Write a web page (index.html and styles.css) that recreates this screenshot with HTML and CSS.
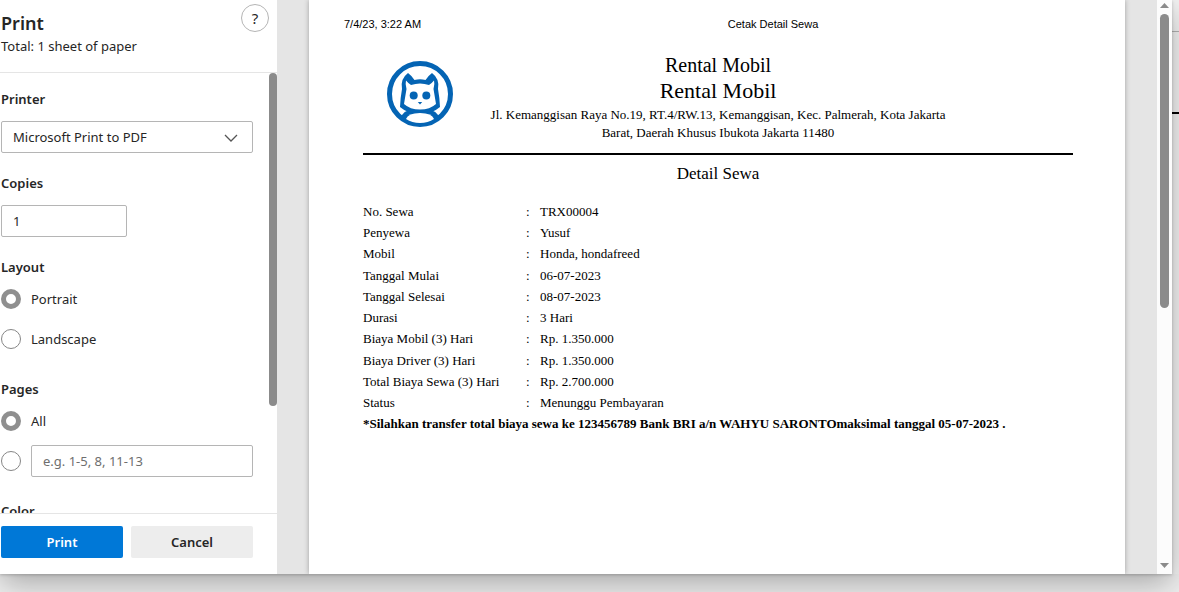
FILE: index.html
```html
<!DOCTYPE html>
<html lang="en">
<head>
<meta charset="utf-8">
<title>Print</title>
<link rel="stylesheet" href="styles.css">
</head>
<body>
<div class="screen">
  <main class="dialog">
    <form class="sidebar">
      <header class="sidebar-head">
        <div>
          <h1 class="title">Print</h1>
          <p class="total">Total: 1 sheet of paper</p>
        </div>
        <button class="help" type="button" aria-label="Help">?</button>
      </header>
      <div class="settings">
        <div class="fields">
          <div class="field">
            <label class="label" for="printer">Printer</label>
            <div class="select-wrap">
              <select class="control" id="printer"><option>Microsoft Print to PDF</option></select>
              <svg class="chevron" viewBox="0 0 14 8" aria-hidden="true"><path d="M1 1l6 6 6-6" fill="none" stroke="#555" stroke-width="1.3"/></svg>
            </div>
          </div>
          <div class="field">
            <label class="label" for="copies">Copies</label>
            <input class="control copies" id="copies" type="text" value="1">
          </div>
          <fieldset class="choices">
            <legend class="label">Layout</legend>
            <label class="choice"><input class="radio" type="radio" name="layout" checked>Portrait</label>
            <label class="choice"><input class="radio" type="radio" name="layout">Landscape</label>
          </fieldset>
          <fieldset class="choices">
            <legend class="label">Pages</legend>
            <label class="choice"><input class="radio" type="radio" name="pages" checked>All</label>
            <div class="choice">
              <input class="radio" type="radio" name="pages" aria-label="Page range">
              <input class="control range" type="text" placeholder="e.g. 1-5, 8, 11-13" aria-label="Pages to print">
            </div>
          </fieldset>
          <div class="label">Color</div>
        </div>
        <div class="side-thumb"></div>
      </div>
      <footer class="actions">
        <button class="button primary" type="button">Print</button>
        <button class="button" type="button">Cancel</button>
      </footer>
    </form>
    <section class="preview">
      <article class="paper">
        <div class="running-head">
          <span>7/4/23, 3:22 AM</span>
          <span class="running-title">Cetak Detail Sewa</span>
        </div>
        <header class="letterhead">
          <svg class="logo" viewBox="0 0 66 66" role="img" aria-label="Rental Mobil logo">
            <circle cx="33" cy="33" r="30.5" fill="#fff" stroke="#0464b4" stroke-width="5"/>
            <path d="M14 57Q16 49 25 49h16q9 0 11 8l-7 5H21z" fill="#0464b4"/>
            <path d="M21 12Q25 15 27.500 19Q33 17.500 38.500 19Q41 15 45 12Q53 18 51 28Q52.500 36 53 46Q45 53 33 53Q21 53 13 46Q13.500 36 15 28Q13 18 21 12Z" fill="#0464b4"/>
            <path d="M19 19.500Q21 22 24 24Q33 21 42 24Q45 22 47 19.500Q48 23 46.500 28L49 43Q43 48.500 33 48.500T17 43L19.500 28Q18 23 19 19.500Z" fill="#fff"/>
            <circle cx="26.700" cy="34.500" r="4" fill="#0464b4"/><circle cx="39.300" cy="34.500" r="4" fill="#0464b4"/>
            <path d="M30.800 41h4.400L33 43.500z" fill="#0464b4"/>
            <path d="M19 58q2-6 14-6t14 6q-6 4-14 4t-14-4z" fill="#fff"/>
          </svg>
          <div class="company">
            <p class="company-small">Rental Mobil</p>
            <p class="company-large">Rental Mobil</p>
            <p class="address">Jl. Kemanggisan Raya No.19, RT.4/RW.13, Kemanggisan, Kec. Palmerah, Kota Jakarta Barat, Daerah Khusus Ibukota Jakarta 11480</p>
          </div>
        </header>
        <h2 class="doc-title">Detail Sewa</h2>
        <table class="details">
          <tr><th scope="row">No. Sewa</th><td class="colon">:</td><td>TRX00004</td></tr>
          <tr><th scope="row">Penyewa</th><td class="colon">:</td><td>Yusuf</td></tr>
          <tr><th scope="row">Mobil</th><td class="colon">:</td><td>Honda, hondafreed</td></tr>
          <tr><th scope="row">Tanggal Mulai</th><td class="colon">:</td><td>06-07-2023</td></tr>
          <tr><th scope="row">Tanggal Selesai</th><td class="colon">:</td><td>08-07-2023</td></tr>
          <tr><th scope="row">Durasi</th><td class="colon">:</td><td>3 Hari</td></tr>
          <tr><th scope="row">Biaya Mobil (3) Hari</th><td class="colon">:</td><td>Rp. 1.350.000</td></tr>
          <tr><th scope="row">Biaya Driver (3) Hari</th><td class="colon">:</td><td>Rp. 1.350.000</td></tr>
          <tr><th scope="row">Total Biaya Sewa (3) Hari</th><td class="colon">:</td><td>Rp. 2.700.000</td></tr>
          <tr><th scope="row">Status</th><td class="colon">:</td><td>Menunggu Pembayaran</td></tr>
        </table>
        <p class="note">*Silahkan transfer total biaya sewa ke 123456789 Bank BRI a/n WAHYU SARONTOmaksimal tanggal 05-07-2023 .</p>
      </article>
    </section>
    <div class="scrollbar">
      <svg class="arrow" viewBox="0 0 9 5" aria-hidden="true"><path d="M0 5L4.500 0 9 5z" fill="#8b8b8b"/></svg>
      <div class="thumb"></div>
      <svg class="arrow arrow-down" viewBox="0 0 9 5" aria-hidden="true"><path d="M0 0h9L4.500 5z" fill="#8b8b8b"/></svg>
    </div>
  </main>
  <div class="backdrop">
    <div class="backdrop-top"></div>
    <div class="backdrop-mid"></div>
  </div>
</div>
</body>
</html>
```

FILE: styles.css
```css
* { box-sizing: border-box; }

body {
  margin: 0;
  background: #f0f0f0;
  color: #262626;
  font: 13px/20px "Noto Sans", sans-serif;
}

h1, h2, p { margin: 0; font-weight: 400; }
button, input, select { font: inherit; color: inherit; }

.screen {
  display: flex;
  height: 100vh;
  padding-bottom: 18px;
  overflow: hidden;
}

.dialog {
  position: relative;
  z-index: 1;
  display: flex;
  flex: 1;
  min-width: 0;
  background: #e5e5e5;
  box-shadow: 0 1px 3px rgba(0, 0, 0, .2), 0 10px 30px rgba(0, 0, 0, .3);
}

.backdrop { width: 7px; background: #f4f4f4; }
.backdrop-top { height: 32px; border-bottom: 1px solid #b4b4b4; }
.backdrop-mid { height: 82px; border-bottom: 2px solid #000; }

.sidebar {
  display: flex;
  flex-direction: column;
  width: 277px;
  background: #fff;
}

.sidebar-head {
  display: flex;
  justify-content: space-between;
  height: 73px;
  padding: 4px 8px 0 1px;
  border-bottom: 1px solid #e5e5e5;
}

.title {
  padding-top: 6px;
  font-size: 18px;
  font-weight: 600;
  line-height: 26px;
}

.help {
  width: 28px;
  height: 28px;
  padding: 0;
  border: 1px solid #b5b5b5;
  border-radius: 50%;
  background: #fff;
  font-size: 15px;
}

.settings {
  display: flex;
  flex: 1;
  justify-content: space-between;
  min-height: 0;
  overflow: hidden;
}

.fields { width: 253px; padding: 16px 0 0 1px; }

.side-thumb {
  width: 8px;
  height: 333px;
  border-radius: 4px;
  background: #8b8b8b;
}

.field {
  display: flex;
  flex-direction: column;
  gap: 12px;
  margin-bottom: 20px;
}

.label {
  display: block;
  padding: 0;
  font-weight: 600;
}

.control {
  width: 100%;
  height: 32px;
  padding: 0 11px;
  border: 1px solid #b5b5b5;
  border-radius: 2px;
  background: #fff;
  appearance: none;
}

.copies { width: 50%; }
.range { flex: 1; min-width: 0; }
.range::placeholder { color: #6e6e6e; }

.select-wrap { position: relative; }

.chevron {
  position: absolute;
  top: 13px;
  right: 15px;
  width: 14px;
  height: 8px;
  pointer-events: none;
}

.choices {
  min-width: 0;
  margin: 0 0 24px;
  padding: 0;
  border: 0;
}

.choices .label { margin-bottom: 6px; }

.choice {
  display: flex;
  align-items: center;
  gap: 10px;
  height: 32px;
}

.choice + .choice { margin-top: 8px; }

.radio {
  flex: none;
  width: 20px;
  height: 20px;
  margin: 0;
  border: 1px solid #868686;
  border-radius: 50%;
  background: #fff;
  appearance: none;
}

.radio:checked { border: 5px solid #8f8f8f; }

.actions {
  display: flex;
  gap: 8px;
  height: 61px;
  padding: 12px 24px 16px 1px;
  border-top: 1px solid #e5e5e5;
}

.button {
  flex: 1;
  height: 32px;
  border: 0;
  border-radius: 2px;
  background: #ededed;
  font-weight: 600;
}

.primary { background: #0078d7; color: #fff; }

.preview {
  flex: 1;
  min-width: 0;
  padding: 0 32px;
  overflow: hidden;
}

.paper {
  height: 100%;
  padding: 16px 52px 0 54px;
  background: #fff;
  box-shadow: 0 0 5px rgba(0, 0, 0, .3);
  color: #000;
  font: 13px/18px "Liberation Serif", serif;
}

.running-head {
  display: flex;
  margin: 0 -52px 0 -19px;
  font: 11px/16px "Liberation Sans", sans-serif;
}

.running-title { flex: 1; text-align: center; }

.letterhead {
  display: grid;
  grid-template-columns: 114px 1fr 114px;
  margin-top: 20px;
  padding-bottom: 11px;
  border-bottom: 2px solid #000;
}

.logo { width: 66px; height: 66px; margin: 9px 0 0 24px; }

.company { text-align: center; }
.company-small { font-size: 20px; line-height: 26px; }
.company-large { font-size: 22px; line-height: 26px; }
.address { padding-top: 2px; }

.doc-title {
  margin: 9px 0 17px;
  font-size: 17px;
  line-height: 20px;
  text-align: center;
}

.details {
  width: 100%;
  height: 213px;
  border-collapse: collapse;
}

.details th, .details td {
  padding: 0;
  font-weight: 400;
  text-align: left;
}

.details th { width: 163px; }
.details .colon { width: 14px; }

.note { padding-top: 1px; font-weight: 700; white-space: nowrap; }

.scrollbar {
  display: flex;
  flex-direction: column;
  align-items: center;
  width: 15px;
  padding: 3px 0 6px;
  background: #fcfcfc;
}

.arrow { width: 9px; height: 5px; }
.arrow-down { margin-top: auto; }

.thumb {
  width: 9px;
  height: 294px;
  margin-top: 6px;
  border-radius: 5px;
  background: #8b8b8b;
}
```
